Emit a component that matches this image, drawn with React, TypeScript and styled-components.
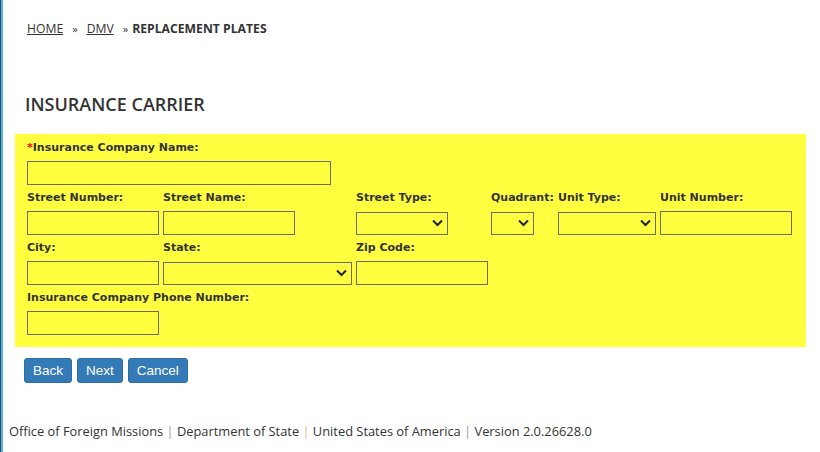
import React from 'react';
import styled, { createGlobalStyle } from 'styled-components';

const GlobalStyle = createGlobalStyle`
  html, body {
    margin: 0;
    padding: 0;
    background: #fff;
  }
  body {
    font-family: 'Open Sans', 'Liberation Sans', sans-serif;
    color: #333;
  }
`;

const Page = styled.div`
  min-height: 452px;
  box-sizing: border-box;
  border-left: 1px solid #3a4a58;
  box-shadow: inset 2px 0 0 #45b9ea;
  padding-left: 2px;
  display: flex;
  flex-direction: column;
`;

const Main = styled.main`
  padding: 19px 14px 0 12px;
`;

const Breadcrumb = styled.nav`
  padding-left: 12px;
  font-size: 12.2px;
  line-height: 20px;
  display: flex;
  align-items: center;
  gap: 7px;
`;

const Crumb = styled.a`
  color: #333;
  text-decoration: underline;
`;

const Sep = styled.span`
  font-size: 11px;
  margin: 0 2px;
`;

const Current = styled.span`
  font-weight: 700;
  margin-left: -5px;
`;

const Heading = styled.h2`
  margin: 50px 0 0 10px;
  font-size: 18px;
  font-weight: 600;
  line-height: 30px;
  color: #333;
`;

const Panel = styled.section`
  margin-top: 15px;
  background: #ffff40;
  padding: 0 0 13px 12px;
  width: 791px;
  box-sizing: border-box;
`;

const Grid = styled.div`
  display: grid;
  grid-template-columns: 136px 193px 135px 67px 102px 136px;
  grid-auto-rows: 27px 23px;
  row-gap: 0;
`;

const Row = styled.div`
  display: contents;
`;

const Label = styled.label<{ $span?: number }>`
  grid-column: span ${(p) => p.$span ?? 1};
  font-family: 'DejaVu Sans', Tahoma, sans-serif;
  font-weight: 700;
  font-size: 11px;
  color: #333;
  line-height: 27px;
  white-space: nowrap;
`;

const Req = styled.span`
  color: #e00;
`;

const Cell = styled.div<{ $span?: number }>`
  grid-column: span ${(p) => p.$span ?? 1};
  display: flex;
`;

const Input = styled.input<{ $w: number }>`
  width: ${(p) => p.$w}px;
  height: 24px;
  box-sizing: border-box;
  border: 1px solid #6b6b6b;
  background: transparent;
  padding: 0 4px;
  outline: none;
`;

const SelectBox = styled.div<{ $w: number }>`
  position: relative;
  width: ${(p) => p.$w}px;
  height: 23px;
  margin-top: 1px;
  box-sizing: border-box;
  border: 1px solid #6b6b6b;
`;

const NativeSelect = styled.select`
  appearance: none;
  width: 100%;
  height: 100%;
  border: none;
  background: transparent;
  outline: none;
`;

const Chevron = styled.svg`
  position: absolute;
  right: 4px;
  top: 6px;
  pointer-events: none;
`;

const Buttons = styled.div`
  display: flex;
  gap: 5px;
  margin: 11px 0 0 9px;
`;

const Button = styled.button`
  font-family: 'Liberation Sans', Arial, sans-serif;
  font-size: 13.5px;
  color: #fff;
  background: #337ab7;
  border: 1px solid #2e6da4;
  border-radius: 3px;
  height: 25px;
  padding: 0 8px;
  cursor: pointer;
`;

const Footer = styled.footer`
  margin-top: auto;
  padding: 0 0 12px 6px;
  font-size: 12.85px;
  line-height: 18px;
  color: #333;
`;

const Pipe = styled.span<{ $accent?: boolean }>`
  color: ${(p) => (p.$accent ? '#f0b08a' : '#999')};
`;

const Select = ({ w }: { w: number }) => (
  <SelectBox $w={w}>
    <NativeSelect />
    <Chevron width="11" height="8" viewBox="0 0 11 8">
      <path d="M1 1.5 L5.5 6 L10 1.5" fill="none" stroke="#222" strokeWidth="2" />
    </Chevron>
  </SelectBox>
);

const App = (): JSX.Element => {
  return (
    <Page>
      <GlobalStyle />
      <Main>
        <Breadcrumb>
          <Crumb href="#">HOME</Crumb>
          <Sep>»</Sep>
          <Crumb href="#">DMV</Crumb>
          <Sep>»</Sep>
          <Current>REPLACEMENT PLATES</Current>
        </Breadcrumb>
        <Heading>INSURANCE CARRIER</Heading>
        <Panel>
          <Grid>
            <Row>
              <Label $span={6}>
                <Req>*</Req>Insurance Company Name:
              </Label>
              <Cell $span={6}>
                <Input $w={304} />
              </Cell>
            </Row>
            <Row>
              <Label>Street Number:</Label>
              <Label>Street Name:</Label>
              <Label>Street Type:</Label>
              <Label>Quadrant:</Label>
              <Label>Unit Type:</Label>
              <Label>Unit Number:</Label>
              <Cell>
                <Input $w={132} />
              </Cell>
              <Cell>
                <Input $w={132} />
              </Cell>
              <Cell>
                <Select w={92} />
              </Cell>
              <Cell>
                <Select w={43} />
              </Cell>
              <Cell>
                <Select w={98} />
              </Cell>
              <Cell>
                <Input $w={132} />
              </Cell>
            </Row>
            <Row>
              <Label>City:</Label>
              <Label>State:</Label>
              <Label $span={4}>Zip Code:</Label>
              <Cell>
                <Input $w={132} />
              </Cell>
              <Cell>
                <Select w={189} />
              </Cell>
              <Cell $span={4}>
                <Input $w={132} />
              </Cell>
            </Row>
            <Row>
              <Label $span={6}>Insurance Company Phone Number:</Label>
              <Cell $span={6}>
                <Input $w={132} />
              </Cell>
            </Row>
          </Grid>
        </Panel>
        <Buttons>
          <Button>Back</Button>
          <Button>Next</Button>
          <Button>Cancel</Button>
        </Buttons>
      </Main>
      <Footer>
        Office of Foreign Missions <Pipe>|</Pipe> Department of State <Pipe $accent>|</Pipe> United
        States of America <Pipe>|</Pipe> Version 2.0.26628.0
      </Footer>
    </Page>
  );
};

export default App;
